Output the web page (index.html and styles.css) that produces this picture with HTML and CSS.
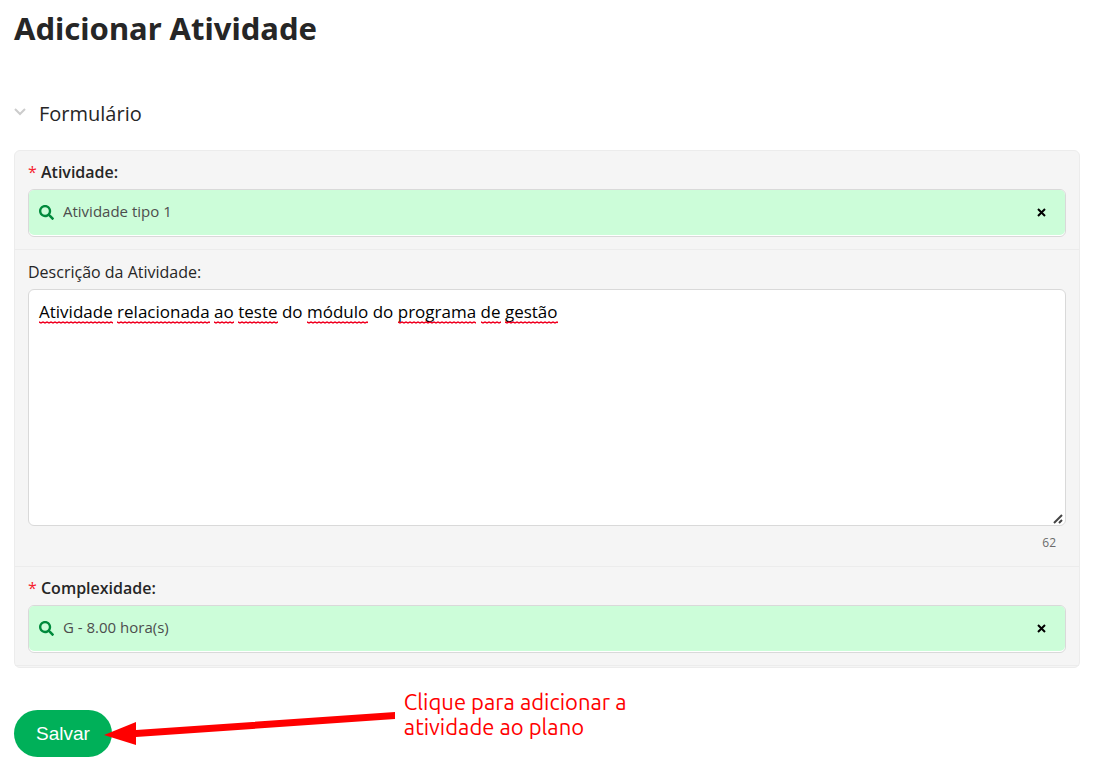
FILE: index.html
```
<!DOCTYPE html>
<html lang="pt-BR">
<head>
    <meta charset="UTF-8">
    <title>Adicionar Atividade</title>
    <link rel="stylesheet" href="styles.css">
</head>
<body>
<main>
    <h1>Adicionar Atividade</h1>
    <form>
        <h2>
            <svg class="chevron" width="12" height="8" viewBox="0 0 12 8"><path d="M1 1l5 5 5-5"/></svg>
            Formulário
        </h2>
        <div class="panel">
            <div class="row">
                <label class="required" for="atividade"><span>*</span> Atividade:</label>
                <div class="lookup">
                    <div class="lookup-inner">
                        <svg class="search" width="15" height="15" viewBox="0 0 512 512"><path d="M505 442.700L405.300 343c-4.500-4.500-10.600-7-17-7H372c27.600-35.300 44-79.700 44-128C416 93.100 322.900 0 208 0S0 93.100 0 208s93.100 208 208 208c48.300 0 92.700-16.400 128-44v16.300c0 6.400 2.500 12.500 7 17l99.700 99.700c9.400 9.400 24.600 9.400 33.900 0l28.300-28.300c9.400-9.400 9.400-24.600.1-34zM208 336c-70.700 0-128-57.200-128-128 0-70.700 57.200-128 128-128 70.700 0 128 57.200 128 128 0 70.700-57.200 128-128 128z"/></svg>
                        <input type="text" id="atividade" name="atividade" value="Atividade tipo 1">
                        <button type="button" class="clear" aria-label="Limpar atividade">
                            <svg width="9" height="9" viewBox="0 0 9 9"><path d="M1 1l7 7M8 1l-7 7"/></svg>
                        </button>
                    </div>
                </div>
            </div>
            <div class="row row-text">
                <label for="descricao">Descrição da Atividade:</label>
                <div class="editor">
                    <textarea id="descricao" name="descricao" spellcheck="false">Atividade relacionada ao teste do módulo do programa de gestão</textarea>
                    <div class="marks" aria-hidden="true"><u>Atividade</u> <u>relacionada</u> <u>ao</u> <u>teste</u> do <u>módulo</u> do <u>programa</u> <u>de</u> <u>gestão</u></div>
                </div>
                <div class="counter">62</div>
            </div>
            <div class="row">
                <label class="required" for="complexidade"><span>*</span> Complexidade:</label>
                <div class="lookup">
                    <div class="lookup-inner">
                        <svg class="search" width="15" height="15" viewBox="0 0 512 512"><path d="M505 442.700L405.300 343c-4.500-4.500-10.600-7-17-7H372c27.600-35.300 44-79.700 44-128C416 93.100 322.900 0 208 0S0 93.100 0 208s93.100 208 208 208c48.300 0 92.700-16.400 128-44v16.300c0 6.400 2.500 12.500 7 17l99.700 99.700c9.400 9.400 24.600 9.400 33.900 0l28.300-28.300c9.400-9.400 9.400-24.600.1-34zM208 336c-70.700 0-128-57.200-128-128 0-70.700 57.200-128 128-128 70.700 0 128 57.200 128 128 0 70.700-57.200 128-128 128z"/></svg>
                        <input type="text" id="complexidade" name="complexidade" value="G - 8.00 hora(s)">
                        <button type="button" class="clear" aria-label="Limpar complexidade">
                            <svg width="9" height="9" viewBox="0 0 9 9"><path d="M1 1l7 7M8 1l-7 7"/></svg>
                        </button>
                    </div>
                </div>
            </div>
        </div>
        <div class="actions">
            <button type="submit" class="save">Salvar</button>
            <div class="hint">
                <svg class="arrow" width="292" height="36" viewBox="0 0 292 36"><path d="M0 24L32 11V19L291 1V8L32 26V34Z"/></svg>
                <p>Clique para adicionar a<br>atividade ao plano</p>
            </div>
        </div>
    </form>
</main>
</body>
</html>
```

FILE: styles.css
```
* {
    box-sizing: border-box;
}

body {
    margin: 0;
    background: #fff;
    color: #262626;
    font-family: "Open Sans", "Noto Sans", sans-serif;
    font-size: 16px;
    line-height: 24px;
}

main {
    padding: 8px 25px 16px 14px;
}

h1 {
    margin: 0 0 52px;
    font-family: "Noto Sans", "Open Sans", sans-serif;
    font-size: 31px;
    line-height: 40px;
    font-weight: 700;
}

h2 {
    display: flex;
    align-items: center;
    gap: 13px;
    margin: 0 0 22px;
    font-size: 20px;
    line-height: 28px;
    font-weight: 400;
}

.chevron {
    margin-bottom: 4px;
    fill: none;
    stroke: #ccc;
    stroke-width: 2;
}

.panel {
    border: 1px solid #ececec;
    border-radius: 6px;
    background: #f5f5f5;
}

.row {
    padding: 9px 13px 12px;
    border-bottom: 1px solid #ececec;
}

.row-text {
    padding-top: 10px;
}

.row:last-child {
    margin-bottom: 1px;
}

label {
    display: block;
    margin-bottom: 5px;
}

.required {
    font-weight: 600;
}

.required span {
    color: #f5222d;
    font-weight: 400;
}

.lookup {
    padding-bottom: 1px;
    border: 1px solid #d9d9d9;
    border-radius: 6px;
    background: #fff;
}

.lookup-inner {
    display: flex;
    align-items: center;
    height: 45px;
    padding: 0 14px 0 10px;
    border-radius: 5px;
    background: #ccfdd9;
}

.search {
    flex: none;
    fill: #008a3c;
}

.lookup input {
    flex: 1;
    min-width: 0;
    height: 44px;
    padding: 0 9px 3px;
    border: 0;
    outline: 0;
    background: transparent;
    color: #4d4d4d;
    font: inherit;
    font-size: 15px;
}

.clear {
    display: flex;
    align-items: center;
    justify-content: center;
    width: 20px;
    height: 20px;
    padding: 0;
    border: 0;
    background: transparent;
    cursor: pointer;
}

.clear path {
    stroke: #000;
    stroke-width: 2;
}

.editor {
    position: relative;
    font-size: 17px;
}

textarea {
    display: block;
    width: 100%;
    height: 237px;
    padding: 10px;
    border: 1px solid #d9d9d9;
    border-radius: 6px;
    background: #fff;
    color: #000;
    font: inherit;
    resize: vertical;
}

textarea::-webkit-resizer {
    background: url("data:image/svg+xml,%3Csvg xmlns='http://www.w3.org/2000/svg' width='15' height='15'%3E%3Cpath d='M4 13l8-8M9 13l3-3' stroke='%23444' stroke-width='2' fill='none'/%3E%3C/svg%3E") no-repeat;
}

/* spelling marks laid over the textarea */
.marks {
    position: absolute;
    inset: 0;
    padding: 11px;
    color: transparent;
    pointer-events: none;
}

.marks u {
    padding-bottom: 1px;
    text-decoration: none;
    background: url("data:image/svg+xml,%3Csvg xmlns='http://www.w3.org/2000/svg' width='4' height='3'%3E%3Cpath d='M-1 2l1-1 2 1 2-1 1 1' stroke='%23f00020' stroke-width='1.500' fill='none'/%3E%3C/svg%3E") repeat-x left bottom;
}

.counter {
    padding: 6px 10px 0;
    color: #6b6b6b;
    font-size: 12px;
    line-height: 22px;
    text-align: right;
}

.actions {
    display: flex;
    align-items: flex-start;
    margin-top: 42px;
}

.save {
    height: 47px;
    padding: 0 22px;
    border: 0;
    border-radius: 24px;
    background: #00b059;
    color: #fff;
    font-family: "Liberation Sans", Arial, sans-serif;
    font-size: 19px;
    cursor: pointer;
}

.save:hover {
    background: #009a4e;
}

.hint {
    display: flex;
    gap: 8px;
    margin: -21px 0 0 -8px;
}

.arrow {
    margin-top: 22px;
    fill: #f00;
}

.hint p {
    margin: 0;
    color: #f00;
    font-family: Ubuntu, "Open Sans", sans-serif;
    font-size: 22px;
    line-height: 25px;
}
```
